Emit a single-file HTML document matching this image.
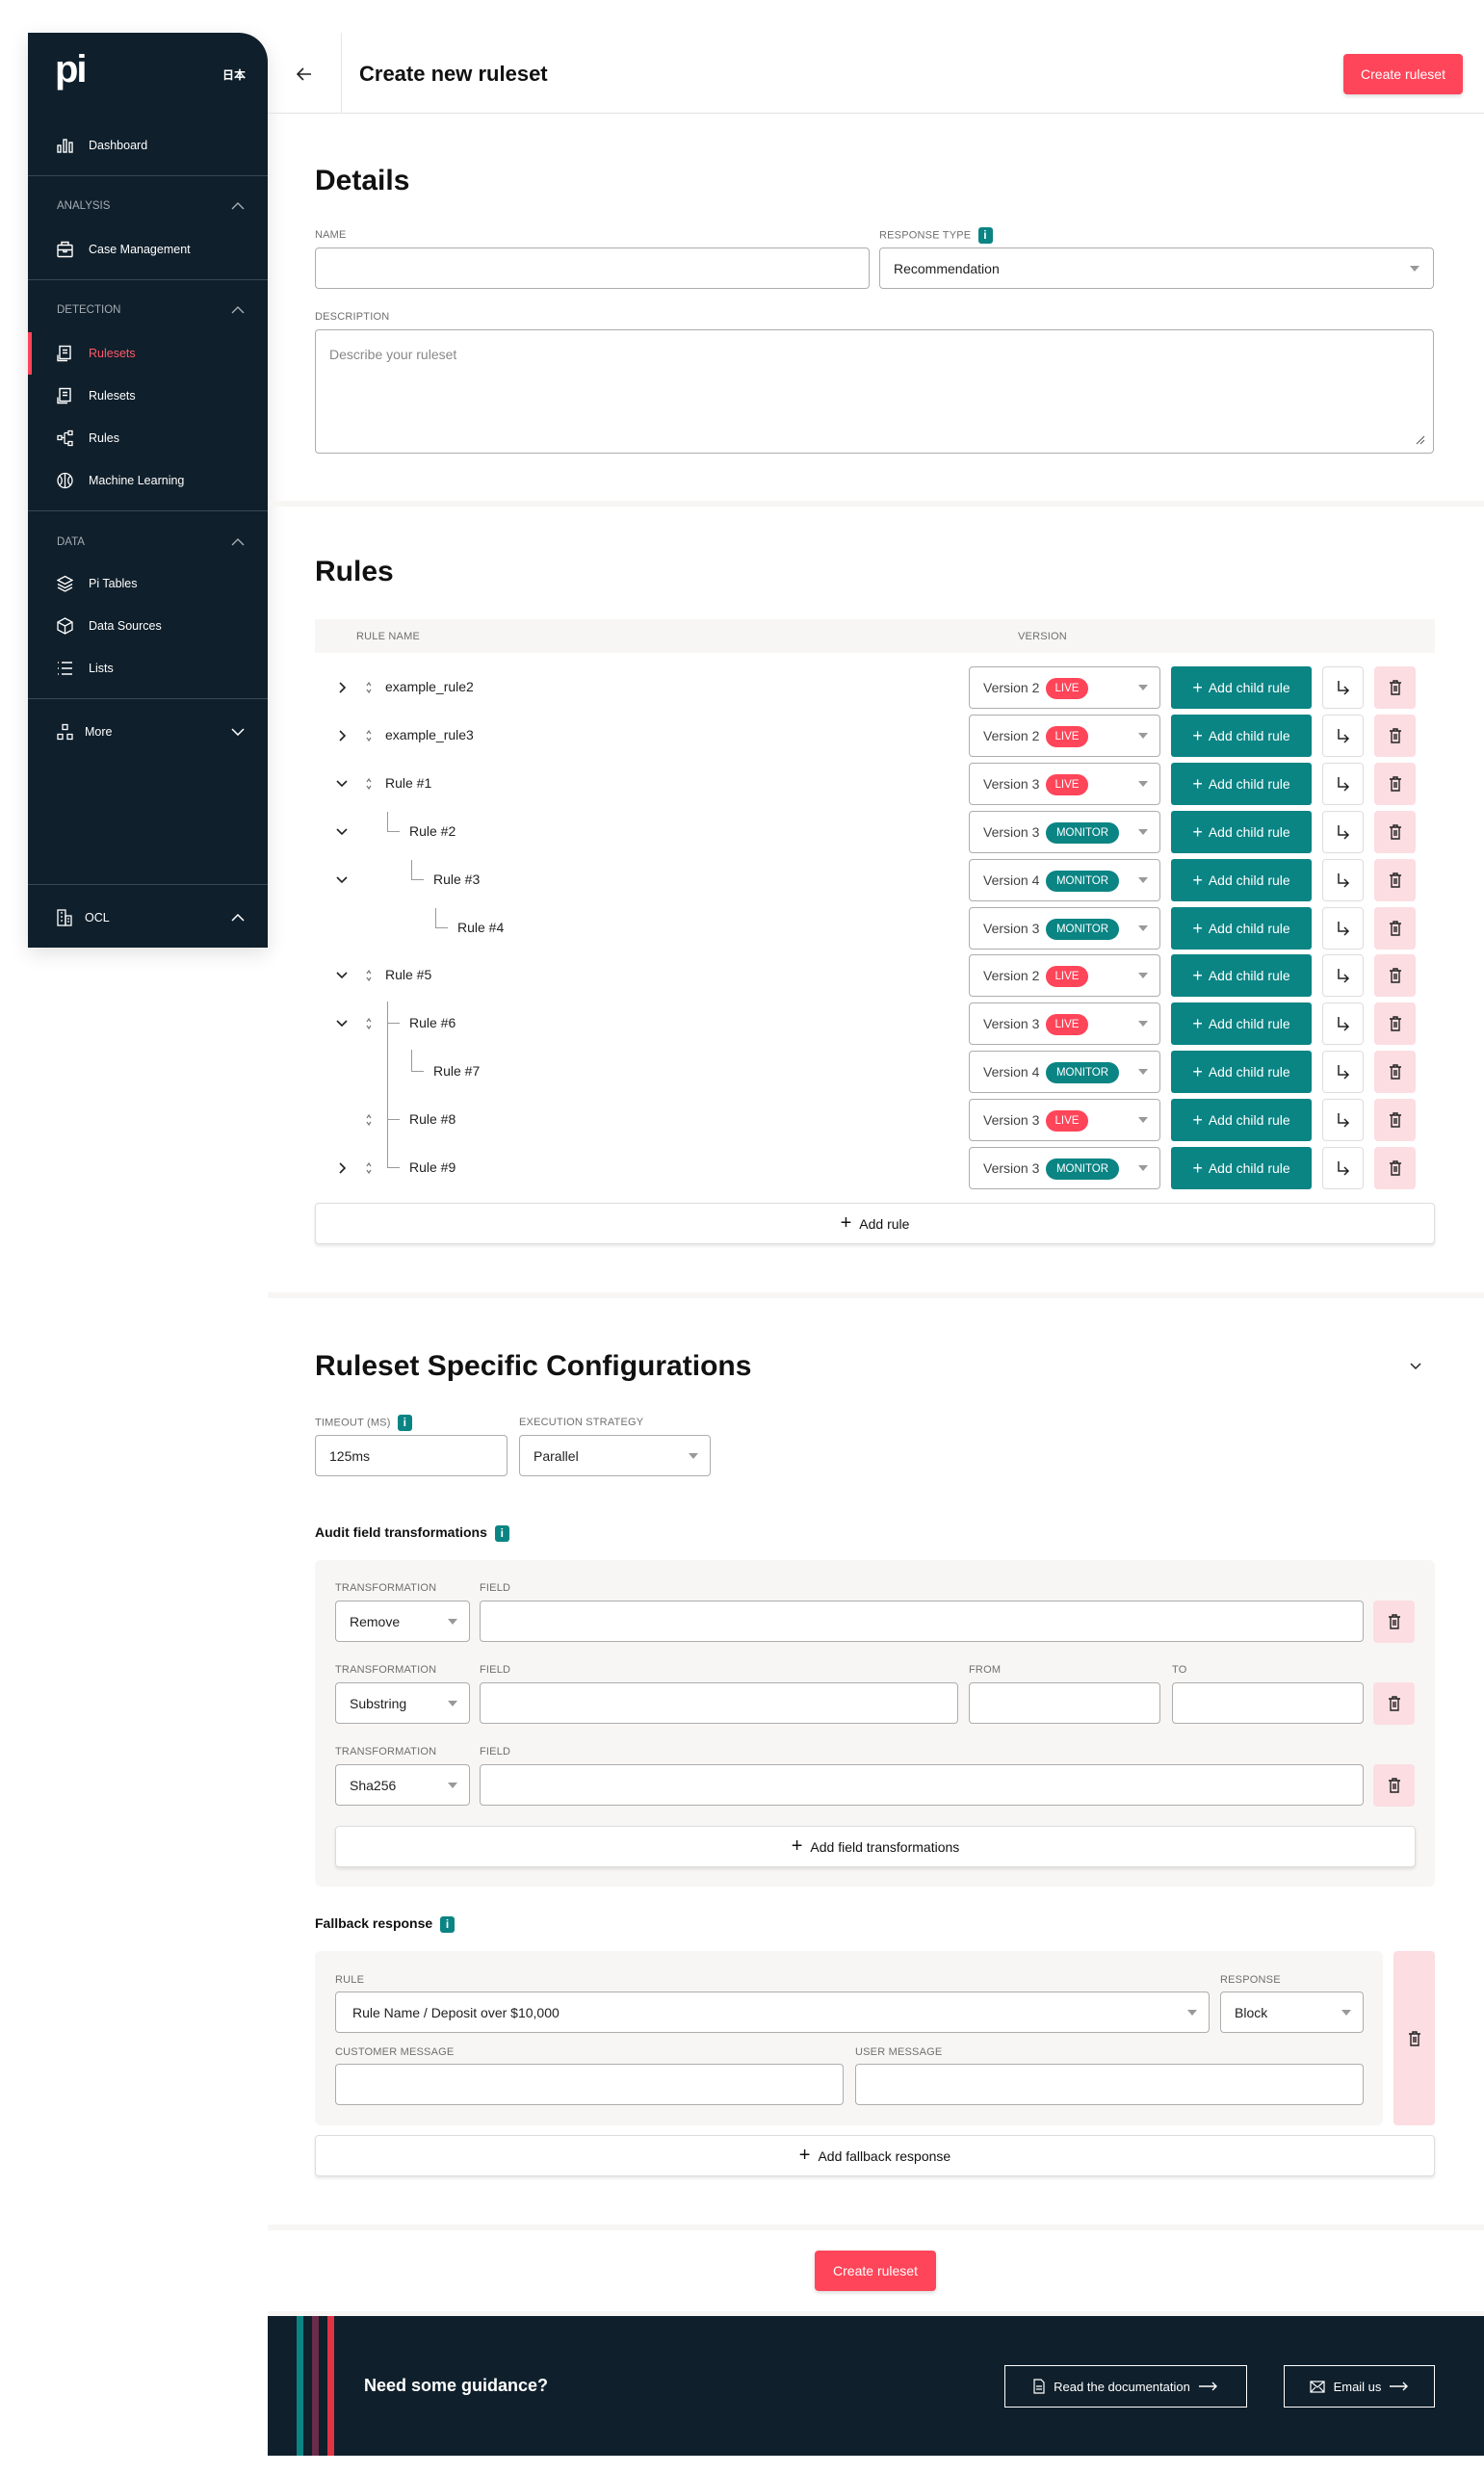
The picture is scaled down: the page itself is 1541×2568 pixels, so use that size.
<!DOCTYPE html>
<html><head><meta charset="utf-8"><style>
*{box-sizing:border-box;margin:0;padding:0}
body{width:1541px;height:2568px;position:relative;background:#fff;font-family:"Liberation Sans","Noto Sans CJK JP",sans-serif;color:#111;overflow:hidden}
.a{position:absolute}
.sb{position:absolute;left:29px;top:34px;width:249px;height:950px;background:#0f1f2b;border-top-right-radius:30px;box-shadow:0 6px 20px rgba(0,0,0,.12)}
.si{position:absolute;left:63px;font-size:12.5px;color:#fff;transform:translateY(-50%)}
.ic{position:absolute;left:30px;transform:translateY(-50%)}
.sh{position:absolute;left:30px;font-size:11.5px;color:#a6adb3;transform:translateY(-50%)}
.sd{position:absolute;left:0;width:249px;height:1px;background:#3a4852}
.chev{position:absolute;right:24px;transform:translateY(-50%)}
.lbl{position:absolute;font-size:11px;color:#6f6f6f;letter-spacing:.2px}
.inp{position:absolute;border:1px solid #adadad;border-radius:4px;background:#fff;font-size:14px;color:#222;padding-left:14px;display:flex;align-items:center}
.car{position:absolute;right:12px;top:50%;margin-top:-3px;width:0;height:0;border-left:5px solid transparent;border-right:5px solid transparent;border-top:6px solid #999}
.h2{position:absolute;left:327px;font-weight:bold;font-size:30px;transform:translateY(-50%)}
.sep{position:absolute;left:278px;width:1263px;height:6px;background:#f7f6f4}
.row{position:absolute;left:0;width:1541px;height:44px}
.ver{position:absolute;left:1006px;width:199px;height:44px;border:1px solid #adadad;border-radius:4px;font-size:14px;color:#444}
.ver span.t{position:absolute;left:14px;top:13px}
.bd{position:absolute;left:79px;top:11px;height:22px;border-radius:11px;color:#fff;font-size:11.5px;line-height:22px;text-align:center}
.live{background:#ff4559;width:44px}
.mon{background:#0b8484;width:76px}
.add{position:absolute;left:1216px;width:146px;height:44px;background:#0b8484;border-radius:3px;color:#fff;font-size:14px;display:flex;align-items:center;justify-content:center;gap:6px}
.arr{position:absolute;left:1373px;width:43px;height:44px;border:1px solid #ddd;border-radius:4px;display:flex;align-items:center;justify-content:center}
.tr{position:absolute;width:43px;height:44px;background:#fcdde1;border-radius:4px;display:flex;align-items:center;justify-content:center}
.rn{position:absolute;font-size:14px;color:#222;top:13px}
.wbtn{position:absolute;left:327px;width:1163px;height:43px;border:1px solid #ddd;border-radius:4px;background:#fff;box-shadow:0 2px 3px rgba(0,0,0,.1);font-size:14px;display:flex;align-items:center;justify-content:center;gap:8px}
.info{display:inline-block;width:15px;height:17px;background:#0b8484;border-radius:3px;color:#fff;font-size:12px;font-weight:bold;text-align:center;line-height:17px;vertical-align:middle;margin-left:4px}
.red{position:absolute;background:#ff4559;color:#fff;border-radius:4px;font-size:14px;display:flex;align-items:center;justify-content:center;box-shadow:0 2px 4px rgba(0,0,0,.15)}
.fb{position:absolute;border:1.5px solid #fff;color:#fff;font-size:13px;display:flex;align-items:center;justify-content:center;gap:9px}
</style></head><body>

<div class="sb">
 <div class="a" style="left:28px;top:18px;color:#fff;font-size:40px;font-weight:bold;letter-spacing:-2px;line-height:40px">pi</div>
 <div class="a" style="left:202px;top:35px;color:#fff;font-size:12px;font-weight:bold">日本</div>
 <svg class="ic" style="top:117px" width="18" height="16" viewBox="0 0 18 16" fill="none" stroke="#fff" stroke-width="1.4"><rect x="1" y="8" width="3" height="7"/><rect x="7" y="2" width="3" height="13"/><rect x="13" y="5" width="3" height="10"/></svg>
 <div class="si" style="top:117px">Dashboard</div>
 <div class="sd" style="top:148px"></div>
 <div class="sh" style="top:180px">ANALYSIS</div>
 <svg class="chev" style="top:180px" width="14" height="8" viewBox="0 0 14 8" fill="none" stroke="#a6adb3" stroke-width="1.4"><path d="M1 7l6-6 6 6"/></svg>
 <svg class="ic" style="top:225px" width="17" height="17" viewBox="0 0 17 17" fill="none" stroke="#fff" stroke-width="1.4"><rect x="1" y="4" width="15" height="12" rx="1"/><path d="M5 4V1h7v3M1 9h15M7 9v2h3V9"/></svg>
 <div class="si" style="top:225px">Case Management</div>
 <div class="sd" style="top:256px"></div>
 <div class="sh" style="top:288px">DETECTION</div>
 <svg class="chev" style="top:288px" width="14" height="8" viewBox="0 0 14 8" fill="none" stroke="#a6adb3" stroke-width="1.4"><path d="M1 7l6-6 6 6"/></svg>
 <div class="a" style="left:0;top:311px;width:4px;height:44px;background:#ff4559"></div>
 <svg class="ic" style="top:333px" width="15" height="17" viewBox="0 0 15 17" fill="none" stroke="#fff" stroke-width="1.4"><rect x="3" y="1" width="11" height="13"/><path d="M1 10v6h10M6 5h5M6 8h5"/></svg>
 <div class="si" style="top:333px;color:#ff5a6a">Rulesets</div>
 <svg class="ic" style="top:377px" width="15" height="17" viewBox="0 0 15 17" fill="none" stroke="#fff" stroke-width="1.4"><rect x="3" y="1" width="11" height="13"/><path d="M1 10v6h10M6 5h5M6 8h5"/></svg>
 <div class="si" style="top:377px">Rulesets</div>
 <svg class="ic" style="top:421px" width="17" height="17" viewBox="0 0 17 17" fill="none" stroke="#fff" stroke-width="1.3"><rect x="1" y="6" width="4" height="4"/><rect x="12" y="1" width="4" height="4"/><rect x="12" y="12" width="4" height="4"/><path d="M5 8h3M8 3v11M8 3h4M8 14h4"/></svg>
 <div class="si" style="top:421px">Rules</div>
 <svg class="ic" style="top:465px" width="17" height="17" viewBox="0 0 17 17" fill="none" stroke="#fff" stroke-width="1.3"><circle cx="8.5" cy="8.5" r="7.5"/><path d="M8.5 1v15M3 4c3 2 3 7 0 9M14 4c-3 2-3 7 0 9"/></svg>
 <div class="si" style="top:465px">Machine Learning</div>
 <div class="sd" style="top:496px"></div>
 <div class="sh" style="top:529px">DATA</div>
 <svg class="chev" style="top:529px" width="14" height="8" viewBox="0 0 14 8" fill="none" stroke="#a6adb3" stroke-width="1.4"><path d="M1 7l6-6 6 6"/></svg>
 <svg class="ic" style="top:572px" width="17" height="17" viewBox="0 0 17 17" fill="none" stroke="#fff" stroke-width="1.3"><path d="M8.5 1L16 5l-7.5 4L1 5z M1 9l7.5 4L16 9M1 12.5l7.5 4 7.5-4"/></svg>
 <div class="si" style="top:572px">Pi Tables</div>
 <svg class="ic" style="top:616px" width="17" height="18" viewBox="0 0 17 18" fill="none" stroke="#fff" stroke-width="1.3"><path d="M8.5 1L16 5v8l-7.5 4L1 13V5z M1 5l7.5 4L16 5M8.5 9v8"/></svg>
 <div class="si" style="top:616px">Data Sources</div>
 <svg class="ic" style="top:660px" width="17" height="14" viewBox="0 0 17 14" fill="none" stroke="#fff" stroke-width="1.4"><path d="M1 1h1M5 1h11M1 7h1M5 7h11M1 13h1M5 13h11"/></svg>
 <div class="si" style="top:660px">Lists</div>
 <div class="sd" style="top:691px"></div>
 <svg class="ic" style="top:726px" width="17" height="17" viewBox="0 0 17 17" fill="none" stroke="#fff" stroke-width="1.3"><rect x="6" y="1" width="5" height="5"/><rect x="1" y="11" width="5" height="5"/><rect x="11" y="11" width="5" height="5"/></svg>
 <div class="si" style="top:726px;left:59px">More</div>
 <svg class="chev" style="top:726px" width="14" height="8" viewBox="0 0 14 8" fill="none" stroke="#fff" stroke-width="1.5"><path d="M1 1l6 6 6-6"/></svg>
 <div class="sd" style="top:884px"></div>
 <svg class="ic" style="top:919px" width="16" height="18" viewBox="0 0 16 18" fill="none" stroke="#fff" stroke-width="1.3"><rect x="1" y="1" width="8" height="16"/><rect x="9" y="7" width="6" height="10"/><path d="M4 4h2M4 8h2M4 12h2M11 10h2M11 13h2"/></svg>
 <div class="si" style="top:919px;left:59px">OCL</div>
 <svg class="chev" style="top:919px" width="14" height="8" viewBox="0 0 14 8" fill="none" stroke="#fff" stroke-width="1.5"><path d="M1 7l6-6 6 6"/></svg>
</div>

<svg class="a" style="left:308px;top:70px" width="16" height="14" viewBox="0 0 16 14" fill="none" stroke="#222" stroke-width="1.6"><path d="M15 7H2M7 1L1 7l6 6"/></svg>
<div class="a" style="left:354px;top:34px;width:1px;height:84px;background:#e5e5e5"></div>
<div class="a" style="left:373px;top:64px;font-size:22px;font-weight:bold">Create new ruleset</div>
<div class="red" style="left:1395px;top:56px;width:124px;height:42px">Create ruleset</div>
<div class="a" style="left:278px;top:117px;width:1263px;height:1px;background:#e2e2e2"></div>

<div class="h2" style="top:188px">Details</div>
<div class="lbl" style="left:327px;top:238px">NAME</div>
<div class="lbl" style="left:913px;top:236px">RESPONSE TYPE <span class="info">i</span></div>
<div class="inp" style="left:327px;top:257px;width:576px;height:43px"></div>
<div class="inp" style="left:913px;top:257px;width:576px;height:43px">Recommendation<div class="car" style="right:14px"></div></div>
<div class="lbl" style="left:327px;top:323px">DESCRIPTION</div>
<div class="inp" style="left:327px;top:342px;width:1162px;height:129px;align-items:flex-start;padding-top:17px;color:#888">Describe your ruleset
<svg class="a" style="right:8px;bottom:8px" width="10" height="10" viewBox="0 0 10 10" stroke="#555"><path d="M1 9L9 1M5 9L9 5"/></svg></div>
<div class="sep" style="top:520px"></div>

<div class="h2" style="top:594px">Rules</div>
<div class="a" style="left:327px;top:643px;width:1163px;height:35px;background:#f7f6f4"></div>
<div class="lbl" style="left:370px;top:655px">RULE NAME</div>
<div class="lbl" style="left:1057px;top:655px">VERSION</div>

<div class="a" style="left:402px;top:843px;width:1px;height:20px;background:#999"></div><div class="a" style="left:402px;top:863px;width:13px;height:1px;background:#999"></div>
<div class="a" style="left:427px;top:893px;width:1px;height:20px;background:#999"></div><div class="a" style="left:427px;top:913px;width:13px;height:1px;background:#999"></div>
<div class="a" style="left:452px;top:943px;width:1px;height:20px;background:#999"></div><div class="a" style="left:452px;top:963px;width:13px;height:1px;background:#999"></div>
<div class="a" style="left:402px;top:1040px;width:1px;height:172px;background:#999"></div>
<div class="a" style="left:402px;top:1062px;width:13px;height:1px;background:#999"></div>
<div class="a" style="left:402px;top:1162px;width:13px;height:1px;background:#999"></div>
<div class="a" style="left:402px;top:1212px;width:13px;height:1px;background:#999"></div>
<div class="a" style="left:427px;top:1090px;width:1px;height:22px;background:#999"></div><div class="a" style="left:427px;top:1112px;width:13px;height:1px;background:#999"></div>

<div id="rows"></div>
<script>
var rows=[
["example_rule2","r",1,400,"Version 2","LIVE"],
["example_rule3","r",1,400,"Version 2","LIVE"],
["Rule #1","d",1,400,"Version 3","LIVE"],
["Rule #2","d",0,425,"Version 3","MONITOR"],
["Rule #3","d",0,450,"Version 4","MONITOR"],
["Rule #4","",0,475,"Version 3","MONITOR"],
["Rule #5","d",1,400,"Version 2","LIVE"],
["Rule #6","d",1,425,"Version 3","LIVE"],
["Rule #7","",0,450,"Version 4","MONITOR"],
["Rule #8","",1,425,"Version 3","LIVE"],
["Rule #9","r",1,425,"Version 3","MONITOR"]];
var trash='<svg width="14" height="16" viewBox="0 0 14 16" fill="none" stroke="#222" stroke-width="1.4"><path d="M1 3h12M5 3V1h4v2M3 3v12h8V3M6 6v6M8 6v6"/></svg>';
var h='';
rows.forEach(function(r,i){
 var top=Math.round(692+i*49.9);
 h+='<div class="row" style="top:'+top+'px">';
 if(r[1]=='r')h+='<svg class="a" style="left:352px;top:16px" width="8" height="12" viewBox="0 0 8 12" fill="none" stroke="#222" stroke-width="1.6"><path d="M1 1l5 5-5 5"/></svg>';
 if(r[1]=='d')h+='<svg class="a" style="left:349px;top:18px" width="12" height="8" viewBox="0 0 12 8" fill="none" stroke="#222" stroke-width="1.6"><path d="M1 1l5 5 5-5"/></svg>';
 if(r[2])h+='<svg class="a" style="left:380px;top:16px" width="6" height="12" viewBox="0 0 6 12" fill="none" stroke="#777" stroke-width="1.2"><path d="M1 4l2-3 2 3M1 8l2 3 2-3"/></svg>';
 h+='<div class="rn" style="left:'+r[3]+'px">'+r[0]+'</div>';
 h+='<div class="ver"><span class="t">'+r[4]+'</span><span class="bd '+(r[5]=='LIVE'?'live':'mon')+'">'+r[5]+'</span><div class="car"></div></div>';
 h+='<div class="add"><span style="font-size:18px;line-height:14px">+</span>Add child rule</div>';
 h+='<div class="arr"><svg width="14" height="16" viewBox="0 0 14 16" fill="none" stroke="#222" stroke-width="1.5"><path d="M2 1v10h10M8 7l4 4-4 4"/></svg></div>';
 h+='<div class="tr" style="left:1427px">'+trash+'</div></div>';
});
document.getElementById('rows').innerHTML=h;
</script>
<div class="wbtn" style="top:1249px"><span style="font-size:20px">+</span>Add rule</div>
<div class="sep" style="top:1342px"></div>

<div class="h2" style="top:1419px">Ruleset Specific Configurations</div>
<svg class="a" style="left:1464px;top:1415px" width="12" height="8" viewBox="0 0 12 8" fill="none" stroke="#222" stroke-width="1.5"><path d="M1 1l5 5 5-5"/></svg>
<div class="lbl" style="left:327px;top:1469px">TIMEOUT (MS) <span class="info">i</span></div>
<div class="lbl" style="left:539px;top:1471px">EXECUTION STRATEGY</div>
<div class="inp" style="left:327px;top:1490px;width:200px;height:43px">125ms</div>
<div class="inp" style="left:539px;top:1490px;width:199px;height:43px">Parallel<div class="car"></div></div>
<div class="a" style="left:327px;top:1583px;font-size:14px;font-weight:bold">Audit field transformations <span class="info">i</span></div>

<div class="a" style="left:327px;top:1620px;width:1163px;height:339px;background:#f7f6f4;border-radius:6px"></div>
<div class="lbl" style="left:348px;top:1643px">TRANSFORMATION</div><div class="lbl" style="left:498px;top:1643px">FIELD</div>
<div class="inp" style="left:348px;top:1662px;width:140px;height:43px">Remove<div class="car"></div></div>
<div class="inp" style="left:498px;top:1662px;width:918px;height:43px"></div>
<div class="tr" style="left:1426px;top:1662px"><svg width="14" height="16" viewBox="0 0 14 16" fill="none" stroke="#222" stroke-width="1.4"><path d="M1 3h12M5 3V1h4v2M3 3v12h8V3M6 6v6M8 6v6"/></svg></div>
<div class="lbl" style="left:348px;top:1728px">TRANSFORMATION</div><div class="lbl" style="left:498px;top:1728px">FIELD</div><div class="lbl" style="left:1006px;top:1728px">FROM</div><div class="lbl" style="left:1217px;top:1728px">TO</div>
<div class="inp" style="left:348px;top:1747px;width:140px;height:43px">Substring<div class="car"></div></div>
<div class="inp" style="left:498px;top:1747px;width:497px;height:43px"></div>
<div class="inp" style="left:1006px;top:1747px;width:199px;height:43px"></div>
<div class="inp" style="left:1217px;top:1747px;width:199px;height:43px"></div>
<div class="tr" style="left:1426px;top:1747px"><svg width="14" height="16" viewBox="0 0 14 16" fill="none" stroke="#222" stroke-width="1.4"><path d="M1 3h12M5 3V1h4v2M3 3v12h8V3M6 6v6M8 6v6"/></svg></div>
<div class="lbl" style="left:348px;top:1813px">TRANSFORMATION</div><div class="lbl" style="left:498px;top:1813px">FIELD</div>
<div class="inp" style="left:348px;top:1832px;width:140px;height:43px">Sha256<div class="car"></div></div>
<div class="inp" style="left:498px;top:1832px;width:918px;height:43px"></div>
<div class="tr" style="left:1426px;top:1832px"><svg width="14" height="16" viewBox="0 0 14 16" fill="none" stroke="#222" stroke-width="1.4"><path d="M1 3h12M5 3V1h4v2M3 3v12h8V3M6 6v6M8 6v6"/></svg></div>
<div class="wbtn" style="left:348px;width:1122px;top:1896px"><span style="font-size:20px">+</span>Add field transformations</div>

<div class="a" style="left:327px;top:1989px;font-size:14px;font-weight:bold">Fallback response <span class="info">i</span></div>
<div class="a" style="left:327px;top:2026px;width:1109px;height:181px;background:#f7f6f4;border-radius:6px"></div>
<div class="a" style="left:1447px;top:2026px;width:43px;height:181px;background:#fcdde1;border-radius:4px;display:flex;align-items:center;justify-content:center"><svg width="14" height="16" viewBox="0 0 14 16" fill="none" stroke="#222" stroke-width="1.4"><path d="M1 3h12M5 3V1h4v2M3 3v12h8V3M6 6v6M8 6v6"/></svg></div>
<div class="lbl" style="left:348px;top:2050px">RULE</div><div class="lbl" style="left:1267px;top:2050px">RESPONSE</div>
<div class="inp" style="left:348px;top:2068px;width:908px;height:43px;padding-left:17px">Rule Name / Deposit over $10,000<div class="car"></div></div>
<div class="inp" style="left:1267px;top:2068px;width:149px;height:43px">Block<div class="car"></div></div>
<div class="lbl" style="left:348px;top:2125px">CUSTOMER MESSAGE</div><div class="lbl" style="left:888px;top:2125px">USER MESSAGE</div>
<div class="inp" style="left:348px;top:2143px;width:528px;height:43px"></div>
<div class="inp" style="left:888px;top:2143px;width:528px;height:43px"></div>
<div class="wbtn" style="top:2217px"><span style="font-size:20px">+</span>Add fallback response</div>
<div class="sep" style="top:2310px"></div>
<div class="red" style="left:846px;top:2337px;width:126px;height:42px">Create ruleset</div>
<div class="sep" style="top:2400px"></div>

<div class="a" style="left:278px;top:2405px;width:1263px;height:145px;background:#0f1f2b"></div>
<div class="a" style="left:308px;top:2405px;width:7px;height:145px;background:#0b8484"></div>
<div class="a" style="left:324px;top:2405px;width:7px;height:145px;background:#6b2b4b"></div>
<div class="a" style="left:340px;top:2405px;width:7px;height:145px;background:#e03344"></div>
<div class="a" style="left:378px;top:2467px;color:#fff;font-size:18px;font-weight:bold">Need some guidance?</div>
<div class="fb" style="left:1043px;top:2456px;width:252px;height:44px"><svg width="12" height="16" viewBox="0 0 12 16" fill="none" stroke="#fff" stroke-width="1.2"><path d="M1 1h7l3 3v11H1zM3 8h6M3 11h6"/></svg>Read the documentation<svg width="20" height="10" viewBox="0 0 20 10" fill="none" stroke="#fff" stroke-width="1.4"><path d="M0 5h18M14 1l4 4-4 4"/></svg></div>
<div class="fb" style="left:1333px;top:2456px;width:157px;height:44px"><svg width="16" height="13" viewBox="0 0 16 13" fill="none" stroke="#fff" stroke-width="1.2"><rect x="1" y="1" width="14" height="11"/><path d="M1 1l7 6 7-6M1 12l5-5M15 12l-5-5"/></svg>Email us<svg width="20" height="10" viewBox="0 0 20 10" fill="none" stroke="#fff" stroke-width="1.4"><path d="M0 5h18M14 1l4 4-4 4"/></svg></div>
</body></html>
